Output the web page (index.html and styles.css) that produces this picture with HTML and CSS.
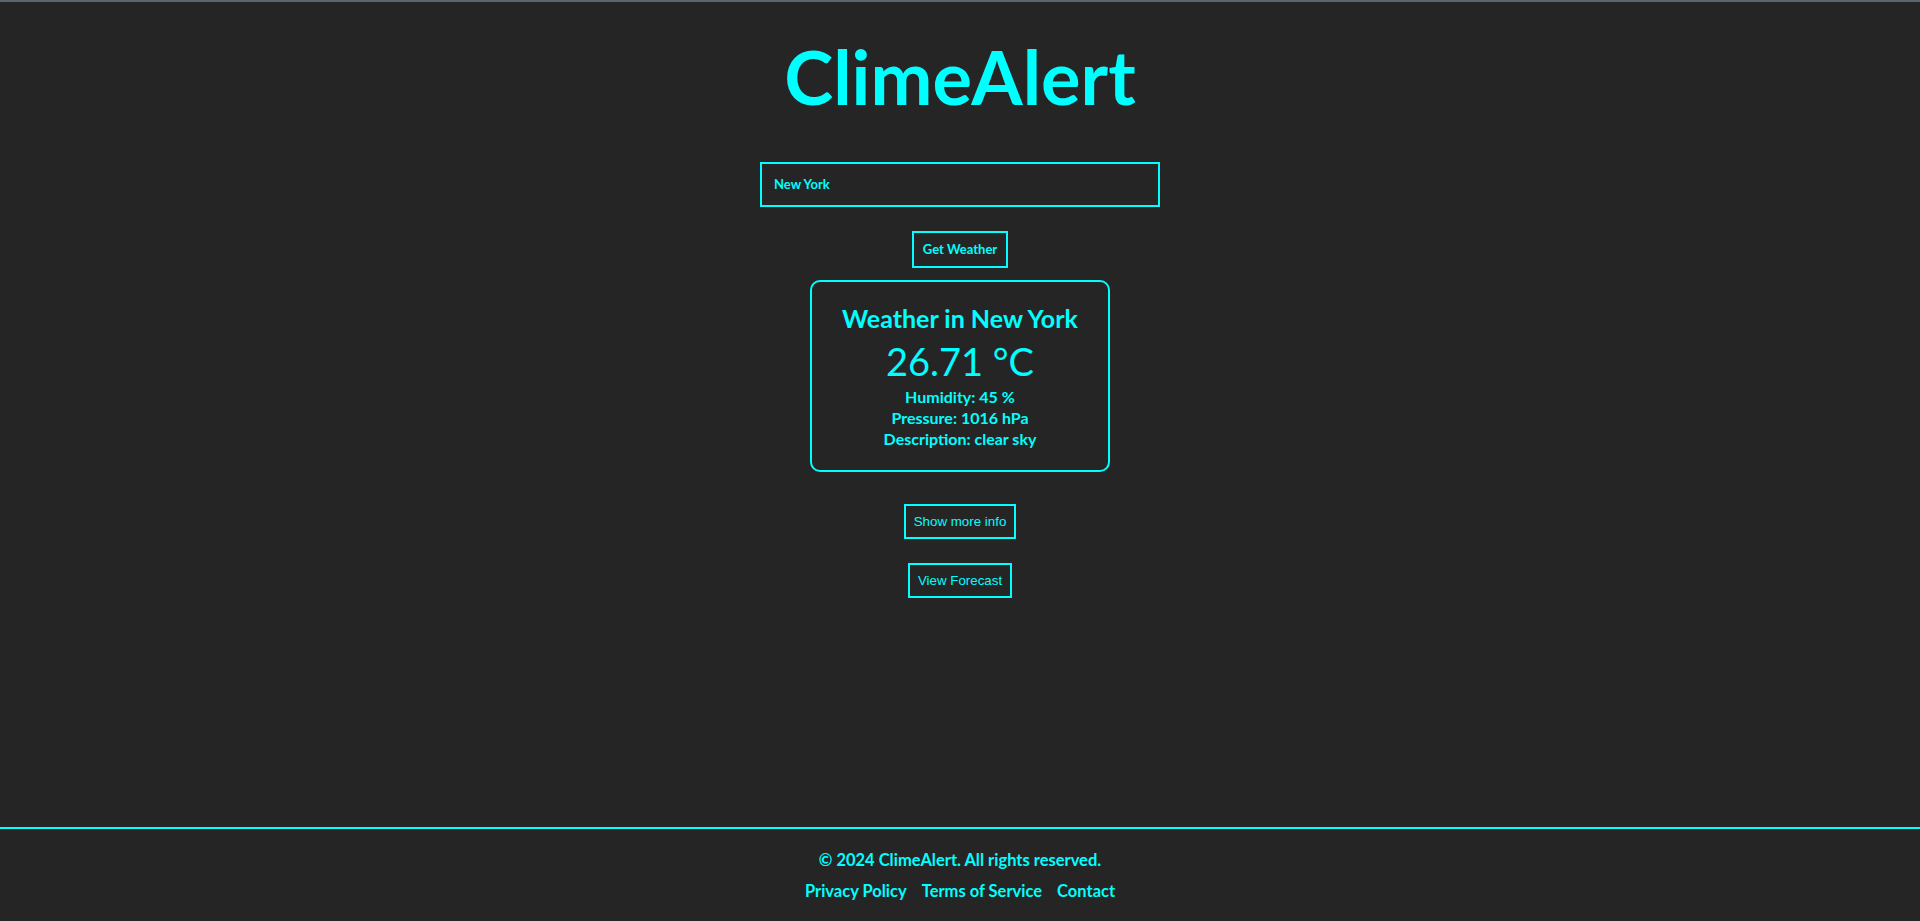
FILE: index.html
```html
<!DOCTYPE html>
<html lang="en">
<head>
    <meta charset="UTF-8">
    <meta name="viewport" content="width=device-width, initial-scale=1.0">
    <title>ClimeAlert</title>
    <link rel="stylesheet" href="styles.css">
</head>
<body>
    <main class="main">
        <h1 class="title">ClimeAlert</h1>

        <input class="city-input" type="text" id="city" value="New York">
        <button class="get-btn" id="get-weather">Get Weather</button>

        <div class="weather-card" id="weather">
            <h2>Weather in New York</h2>
            <div class="temp">26.71 °C</div>
            <p>Humidity: 45 %</p>
            <p>Pressure: 1016 hPa</p>
            <p>Description: clear sky</p>
        </div>

        <button class="plain-btn more-btn">Show more info</button>
        <button class="plain-btn forecast-btn">View Forecast</button>
    </main>

    <footer class="footer">
        <p>© 2024 ClimeAlert. All rights reserved.</p>
        <div class="footer-links">
            <a href="#">Privacy Policy</a>
            <a href="#">Terms of Service</a>
            <a href="#">Contact</a>
        </div>
    </footer>
</body>
</html>
```

FILE: styles.css
```css
* {
    margin: 0;
    padding: 0;
    box-sizing: border-box;
}

html,
body {
    height: 100%;
}

body {
    font-family: Lato, "Open Sans", sans-serif;
    background: #252525;
    color: #00ffff;
    border-top: 2px solid #5b6770;
    display: flex;
    flex-direction: column;
    overflow: hidden;
}

.main {
    flex: 1;
    display: flex;
    flex-direction: column;
    align-items: center;
}

.title {
    font-size: 74px;
    font-weight: 700;
    line-height: 1.2;
    margin-top: 31px;
}

.city-input {
    width: 400px;
    height: 45px;
    margin-top: 40px;
    padding: 0 12px;
    background: transparent;
    border: 2px solid #00ffff;
    color: #00ffff;
    font-family: Lato, sans-serif;
    font-size: 13px;
    font-weight: 700;
    outline: none;
}

.get-btn {
    height: 37px;
    margin-top: 24px;
    padding: 0 9px;
    background: transparent;
    border: 2px solid #00ffff;
    color: #00ffff;
    font-family: Lato, sans-serif;
    font-size: 13px;
    font-weight: 700;
}

.weather-card {
    width: 300px;
    height: 192px;
    margin-top: 12px;
    padding: 22px 10px 0;
    border: 2px solid #00ffff;
    border-radius: 10px;
    text-align: center;
}

.weather-card h2 {
    font-size: 25px;
    font-weight: 700;
    line-height: 29px;
}

.temp {
    font-size: 38px;
    line-height: 46px;
    margin: 5px 0 2px;
}

.weather-card p {
    font-size: 16px;
    font-weight: 700;
    line-height: 21px;
}

.plain-btn {
    padding: 8px;
    background: transparent;
    border: 2px solid #00ffff;
    color: #00ffff;
    font-family: "Liberation Sans", Arial, sans-serif;
    font-size: 13.333px;
}

.more-btn {
    margin-top: 32px;
}

.forecast-btn {
    margin-top: 24px;
}

.footer {
    border-top: 2px solid #00ffff;
    padding: 19px 0 18px;
    text-align: center;
    font-size: 16.5px;
    font-weight: 700;
    line-height: 24px;
}

.footer-links {
    margin-top: 7px;
    display: flex;
    justify-content: center;
    gap: 15px;
}

.footer-links a {
    color: #00ffff;
    text-decoration: none;
}
```
